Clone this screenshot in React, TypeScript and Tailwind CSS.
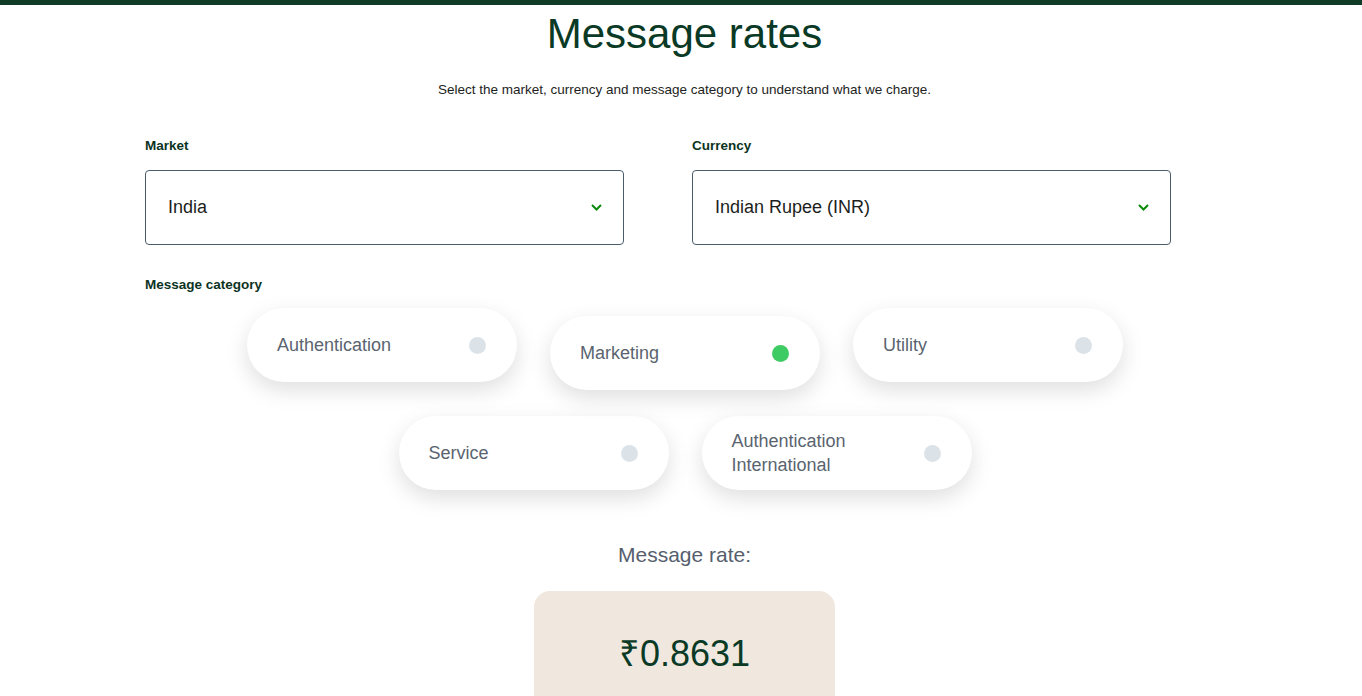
const categories = [
  { label: 'Authentication', active: false },
  { label: 'Marketing', active: true },
  { label: 'Utility', active: false },
];

const categoriesRow2 = [
  { label: 'Service', active: false },
  { label: 'Authentication International', active: false },
];

function Chevron() {
  return (
    <svg width="11" height="7" viewBox="0 0 11 7" fill="none" className="shrink-0">
      <path d="M1 1l4.5 4.5L10 1" stroke="#0a8a0a" strokeWidth="2" />
    </svg>
  );
}

function SelectBox({ label, value }: { label: string; value: string }) {
  return (
    <div className="w-[479px]">
      <p className="text-[13.5px] leading-4 font-bold text-[#0b3323]">{label}</p>
      <div className="mt-4 h-[75px] rounded-[4px] border border-[#4b5d6b] flex items-center justify-between pl-[22px] pr-[21px]">
        <span className="text-[18px] text-[#1c1e21]">{value}</span>
        <Chevron />
      </div>
    </div>
  );
}

function Pill({ label, active }: { label: string; active: boolean }) {
  return (
    <button
      className={
        'w-[270px] h-[74px] rounded-full bg-white flex items-center justify-between pl-[30px] pr-[31px] text-left shadow-[0_8px_22px_rgba(0,0,0,0.13)] ' +
        (active ? 'translate-y-2' : '')
      }
    >
      <span className="text-[18px] leading-6 text-[#5a6470] max-w-[180px]">{label}</span>
      <span className={'w-[17px] h-[17px] rounded-full shrink-0 ' + (active ? 'bg-[#3fcb63]' : 'bg-[#dce3e8]')} />
    </button>
  );
}

export default function App() {
  return (
    <div className="min-h-screen bg-white font-['Liberation_Sans',Arial,sans-serif] overflow-hidden">
      <div className="h-[5px] bg-[#103b27]" />
      <h1 className="mt-[8px] pl-[7px] text-center text-[42px] leading-none text-[#0a3a26]">Message rates</h1>
      <p className="mt-[25px] pl-[7px] text-center text-[13.5px] leading-5 text-[#1c1e21]">
        Select the market, currency and message category to understand what we charge.
      </p>

      <div className="mt-[38px] pl-[145px] flex gap-[68px]">
        <SelectBox label="Market" value="India" />
        <SelectBox label="Currency" value="Indian Rupee (INR)" />
      </div>

      <p className="mt-8 pl-[145px] text-[13.5px] leading-4 font-bold text-[#0b3323]">Message category</p>

      <div className="mt-[15px] pl-[8px] flex flex-col items-center gap-[34px]">
        <div className="flex gap-[33px] items-start">
          {categories.map((c) => (
            <Pill key={c.label} label={c.label} active={c.active} />
          ))}
        </div>
        <div className="flex gap-[33px]">
          {categoriesRow2.map((c) => (
            <Pill key={c.label} label={c.label} active={c.active} />
          ))}
        </div>
      </div>

      <div className="mt-[51px] pl-[7px] flex flex-col items-center">
        <p className="text-[21px] leading-7 text-[#56606d]">Message rate:</p>
        <div className="mt-[22px] w-[301px] h-[150px] rounded-2xl bg-[#f0e8de] pt-[43px] text-center">
          <span className="text-[36px] leading-10 text-[#0a3a26]">₹0.8631</span>
        </div>
      </div>
    </div>
  );
}
